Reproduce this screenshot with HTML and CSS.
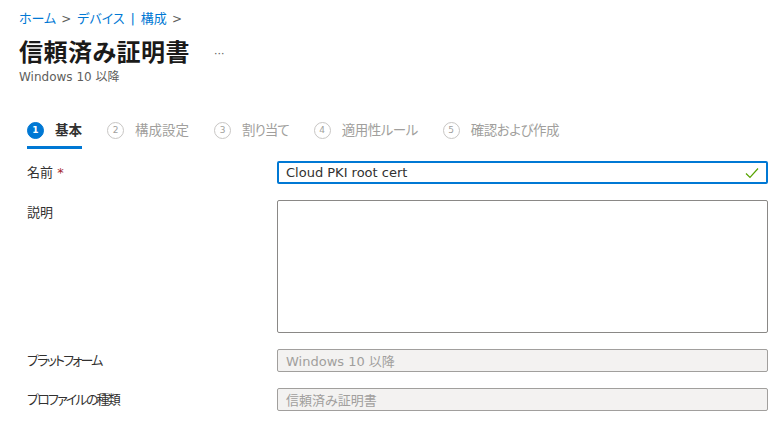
FILE: index.html
```html
<!DOCTYPE html>
<html lang="ja">
<head>
	<meta charset="UTF-8">
	<title>信頼済み証明書</title>
	<link rel="stylesheet" href="styles.css">
</head>
<body>
<div class="page">
	<div class="crumbs">
		<a href="#">ホーム</a><span class="sep">&gt;</span><a href="#">デバイス</a><span class="bar">|</span><a href="#">構成</a><span class="sep">&gt;</span>
	</div>
	<div class="head">
		<h1>信頼済み証明書</h1>
		<span class="more">···</span>
	</div>
	<div class="sub">Windows 10 以降</div>

	<div class="steps">
		<div class="step active"><span class="num">1</span><span class="name">基本</span></div>
		<div class="step"><span class="num">2</span><span class="name">構成設定</span></div>
		<div class="step"><span class="num">3</span><span class="name tight">割り当て</span></div>
		<div class="step"><span class="num">4</span><span class="name snug">適用性ルール</span></div>
		<div class="step"><span class="num">5</span><span class="name snug">確認および作成</span></div>
	</div>

	<div class="form">
		<div class="row">
			<label>名前 <span class="req">*</span></label>
			<div class="field focus">
				<span>Cloud PKI root cert</span>
				<svg class="ok" width="14" height="12" viewBox="0 0 14 12"><path d="M1 6.5 L5 10.5 L13 1.5" fill="none" stroke="#57a300" stroke-width="1.2"/></svg>
			</div>
		</div>
		<div class="row top">
			<label>説明</label>
			<div class="field area"></div>
		</div>
		<div class="row">
			<label class="kana">プラットフォーム</label>
			<div class="field off">Windows 10 以降</div>
		</div>
		<div class="row">
			<label class="kana">プロファイルの種類</label>
			<div class="field off">信頼済み証明書</div>
		</div>
	</div>
</div>
</body>
</html>
```

FILE: styles.css
```css
body { margin:0; background:#fff; color:#323130; font-family:"DejaVu Sans", "Noto Sans CJK JP", sans-serif; font-size:13px; font-feature-settings:"palt"; }
.page { padding:9px 15px 0 19px; }

.crumbs { display:flex; align-items:center; height:18px; font-size:13px; line-height:18px; margin-top:1px; }
.crumbs a { color:#0078d4; text-decoration:none; }
.crumbs .sep { color:#605e5c; margin:0 6px 0 5px; font-size:12px; }
.crumbs .bar { color:#0078d4; margin:0 6px; }

.head { display:flex; align-items:center; margin-top:9px; height:32px; }
h1 { margin:0; font-size:24px; font-weight:700; line-height:30px; color:#1b1a19; letter-spacing:0.5px; }
.more { margin-left:24px; color:#605e5c; font-size:11px; }
.sub { font-size:12px; color:#605e5c; line-height:16px; margin-top:0; }

.steps { display:flex; margin:36px 0 0 8px; height:28px; }
.step { display:flex; align-items:flex-start; margin-right:25px; color:#a19f9d; font-size:13.5px; line-height:18px; }
.step .num { width:15px; height:15px; border:1px solid #c8c6c4; border-radius:50%; font-size:9px; line-height:15px; text-align:center; margin-right:11px; margin-top:1px; }
.step .tight { letter-spacing:-1px; }
.step .snug { letter-spacing:-0.5px; }
.step.active { color:#323130; font-weight:700; border-bottom:3px solid #0078d4; height:25px; }
.step.active .num { background:#0078d4; border-color:#0078d4; color:#fff; }

.form { margin:12px 0 0 8px; }
.row { display:flex; align-items:center; margin-bottom:16px; }
.row.top { align-items:flex-start; }
.row label { width:250px; font-size:13px; line-height:18px; }
.row label.kana { letter-spacing:-1.8px; }
.row.top label { margin-top:4px; }
.req { color:#a4262c; }
.field { flex:1; height:21px; border:1px solid #8a8886; border-radius:2px; display:flex; align-items:center; padding:0 8px; font-size:13px; }
.field.focus { border:2px solid #0078d4; height:19px; padding:0 7px; justify-content:space-between; }
.field.area { height:131px; }
.field.off { background:#f3f2f1; border-color:#a19f9d; color:#a19f9d; }
```
